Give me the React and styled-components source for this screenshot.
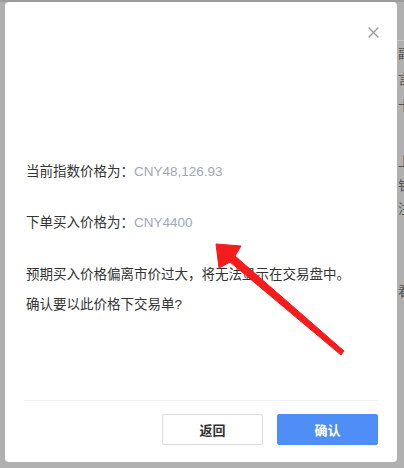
import React from "react";
import styled, { createGlobalStyle } from "styled-components";

const COLORS = {
  backdrop: "#b0b0b0",
  text: "#333333",
  value: "#a0a8b7",
  border: "#dcdcdc",
  divider: "#f0f0f0",
  primary: "#4f8ef7",
  arrow: "#f41c1c",
};

const GlobalStyle = createGlobalStyle`
  html, body {
    margin: 0;
    padding: 0;
  }
  body {
    font-family: "Liberation Sans", "Noto Sans CJK SC", sans-serif;
  }
`;

const App = () => {
  const lines = [
    { label: "当前指数价格为：", value: "CNY48,126.93", space: 31 },
    { label: "下单买入价格为：", value: "CNY4400", space: 32 },
    { label: "预期买入价格偏离市价过大，将无法显示在交易盘中。", space: 10 },
    { label: "确认要以此价格下交易单?", space: 0 },
  ];

  // bits of the page behind the dialog, peeking out at the right edge
  const behind = [
    { ch: "副", gap: 4 },
    { ch: "言", gap: 10 },
    { ch: "卡", gap: 10 },
    { ch: "上", gap: 40 },
    { ch: "钅", gap: 8 },
    { ch: "注", gap: 7 },
    { ch: "看", gap: 67 },
  ];

  return (
    <>
      <GlobalStyle />
      <Backdrop>
        <LeftEdge />
        <Modal>
          <CloseButton aria-label="关闭">
            <svg width="11" height="11" viewBox="0 0 11 11">
              <path
                d="M1 1L10 10M10 1L1 10"
                stroke="#9a9a9a"
                strokeWidth="1.3"
                strokeLinecap="round"
              />
            </svg>
          </CloseButton>
          <Body>
            {lines.map((line) => (
              <Line key={line.label} space={line.space}>
                {line.label}
                {line.value && <Value>{line.value}</Value>}
              </Line>
            ))}
          </Body>
          <Footer>
            <Button>返回</Button>
            <Button primary>确认</Button>
          </Footer>
        </Modal>
        <RightEdge>
          {behind.map((item) => (
            <Peek key={item.ch} gap={item.gap}>
              {item.ch}
            </Peek>
          ))}
        </RightEdge>
        {/* red annotation arrow drawn over the dialog */}
        <Arrow width="404" height="468" viewBox="0 0 404 468">
          <polygon
            points="216,244 241,246 235,256 344,351 341,355 230,262 219,268"
            fill={COLORS.arrow}
            stroke={COLORS.arrow}
            strokeWidth="1"
            strokeLinejoin="round"
          />
        </Arrow>
      </Backdrop>
    </>
  );
};

const Backdrop = styled.div`
  position: relative;
  width: 404px;
  height: 468px;
  background: ${COLORS.backdrop};
  display: flex;
  align-items: flex-start;
  overflow: hidden;
  border-top: 2px solid #9c9c9c;
  box-sizing: border-box;
`;

const LeftEdge = styled.div`
  width: 5px;
  flex-shrink: 0;
`;

const Modal = styled.div`
  position: relative;
  width: 392px;
  height: 460px;
  flex-shrink: 0;
  background: #ffffff;
  border-radius: 4px;
  display: flex;
  flex-direction: column;
  box-sizing: border-box;
`;

const CloseButton = styled.button`
  position: absolute;
  top: 23px;
  right: 16px;
  width: 15px;
  height: 15px;
  padding: 0;
  border: none;
  background: none;
  display: flex;
  align-items: center;
  justify-content: center;
`;

const Body = styled.div`
  flex: 1;
  padding: 160px 0 0 21px;
`;

const Line = styled.p`
  margin: 0 0 ${({ space }) => space}px;
  font-size: 13.5px;
  line-height: 20px;
  color: ${COLORS.text};
  white-space: nowrap;
`;

const Value = styled.span`
  color: ${COLORS.value};
`;

const Footer = styled.div`
  margin: 0 19px;
  padding: 13px 0 17px;
  border-top: 1px solid ${COLORS.divider};
  display: flex;
  justify-content: flex-end;
  gap: 14px;
`;

const Button = styled.button`
  width: 101px;
  height: 31px;
  border-radius: 2px;
  border: 1px solid ${({ primary }) => (primary ? COLORS.primary : COLORS.border)};
  background: ${({ primary }) => (primary ? COLORS.primary : "#ffffff")};
  color: ${({ primary }) => (primary ? "#ffffff" : COLORS.text)};
  font-family: "Noto Sans CJK SC", sans-serif;
  font-size: 13px;
  font-weight: 700;
  box-sizing: border-box;
`;

const RightEdge = styled.div`
  width: 7px;
  flex-shrink: 0;
  margin-top: 38px;
  display: flex;
  flex-direction: column;
  overflow: hidden;
  border-top: 1px solid #c4c4c4;
  font-family: "Noto Sans CJK SC", sans-serif;
  font-size: 13px;
  line-height: 16px;
  color: #555;
`;

const Peek = styled.span`
  margin: ${({ gap }) => gap}px 0 0 1px;
`;

const Arrow = styled.svg`
  position: absolute;
  top: -2px;
  left: 0;
  pointer-events: none;
`;

export default App;
